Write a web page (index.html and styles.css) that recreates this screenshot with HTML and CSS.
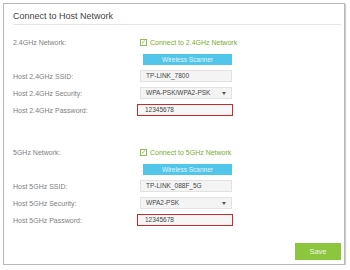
FILE: index.html
```html
<!DOCTYPE html>
<html>
<head>
    <meta charset="UTF-8">
    <title>Connect to Host Network</title>
    <link rel="stylesheet" href="styles.css">
</head>
<body>
    <!-- 메인 패널 -->
    <div class="panel">
        <div class="title">Connect to Host Network</div>

        <!-- 2.4GHz 영역 -->
        <div class="section first">
            <div class="row">
                <span class="label">2.4GHz Network:</span>
                <span class="check"><span class="box">&#10003;</span>Connect to 2.4GHz Network</span>
            </div>
            <div class="row">
                <span class="label"></span>
                <span class="scanner">Wireless Scanner</span>
            </div>
            <div class="row">
                <span class="label">Host 2.4GHz SSID:</span>
                <span class="field">TP-LINK_7800</span>
            </div>
            <div class="row">
                <span class="label">Host 2.4GHz Security:</span>
                <span class="field select">WPA-PSK/WPA2-PSK<span class="arrow"></span></span>
            </div>
            <div class="row">
                <span class="label">Host 2.4GHz Password:</span>
                <span class="field password">12345678</span>
            </div>
        </div>

        <!-- 5GHz 영역 -->
        <div class="section second">
            <div class="row">
                <span class="label">5GHz Network:</span>
                <span class="check"><span class="box">&#10003;</span>Connect to 5GHz Network</span>
            </div>
            <div class="row">
                <span class="label"></span>
                <span class="scanner">Wireless Scanner</span>
            </div>
            <div class="row">
                <span class="label">Host 5GHz SSID:</span>
                <span class="field">TP-LINK_088F_5G</span>
            </div>
            <div class="row">
                <span class="label">Host 5GHz Security:</span>
                <span class="field select">WPA2-PSK<span class="arrow"></span></span>
            </div>
            <div class="row">
                <span class="label">Host 5GHz Password:</span>
                <span class="field password">12345678</span>
            </div>
        </div>

        <!-- 저장 버튼 -->
        <div class="footer">
            <span class="save">Save</span>
        </div>
    </div>
</body>
</html>
```

FILE: styles.css
```css
/* 전체 body 스타일 */
body {
    margin: 0;
    background: #fff;
    font-family: "Liberation Sans", Arial, sans-serif;
    color: #666;
}

/* 패널 테두리 */
.panel {
    margin: 3px 0 0 3px;
    width: 340px;
    height: 260px;
    border: 1px solid #b8b8b8;
    box-shadow: 1px 1px 1px #d0d0d0;
    display: flex;
    flex-direction: column;
}

/* 제목 */
.title {
    margin: 0 3px 0 9px;
    padding-top: 5px;
    height: 15px;
    line-height: 15px;
    font-size: 9px;
    color: #444;
    border-bottom: 1px solid #e6e6e6;
}

.section {
    display: flex;
    flex-direction: column;
    gap: 5px;
    padding-left: 9px;
}

.section.first {
    margin-top: 11px;
}

.section.second {
    margin-top: 30px;
}

/* 한 줄 */
.row {
    display: flex;
    align-items: center;
    height: 12px;
}

.label {
    width: 127px;
    font-size: 7px;
    color: #808080;
}

/* 체크박스 */
.check {
    display: flex;
    align-items: center;
    font-size: 7px;
    color: #7aab2e;
}

.check .box {
    width: 5px;
    height: 5px;
    border: 1px solid #8fbf4a;
    margin-right: 3px;
    font-size: 6px;
    line-height: 5px;
    text-align: center;
    color: #7aab2e;
}

/* 스캐너 버튼 */
.scanner {
    margin-left: 3px;
    width: 89px;
    height: 11px;
    line-height: 11px;
    background: #52c6ea;
    color: #e0f5fc;
    font-size: 6.5px;
    text-align: center;
}

/* 입력칸 */
.field {
    position: relative;
    box-sizing: border-box;
    width: 92px;
    height: 12px;
    line-height: 10px;
    padding-left: 5px;
    background: #f4f4f4;
    border: 1px solid #e2e2e2;
    font-size: 6.5px;
    color: #444;
}

.field.password {
    margin-left: -3px;
    width: 96px;
    background: #f6f6f6;
    border: 1px solid #cc2a2a;
    padding-left: 7px;
}

/* 드롭다운 화살표 */
.arrow {
    position: absolute;
    right: 5px;
    top: 4px;
    border-left: 2.5px solid transparent;
    border-right: 2.5px solid transparent;
    border-top: 3px solid #555;
}

/* 하단 저장 버튼 */
.footer {
    margin-top: auto;
    display: flex;
    justify-content: flex-end;
    padding: 0 3px 4px 0;
}

.save {
    width: 46px;
    height: 17px;
    line-height: 17px;
    background: #8cc63f;
    color: #eef7e2;
    font-size: 7.5px;
    text-align: center;
}
```
